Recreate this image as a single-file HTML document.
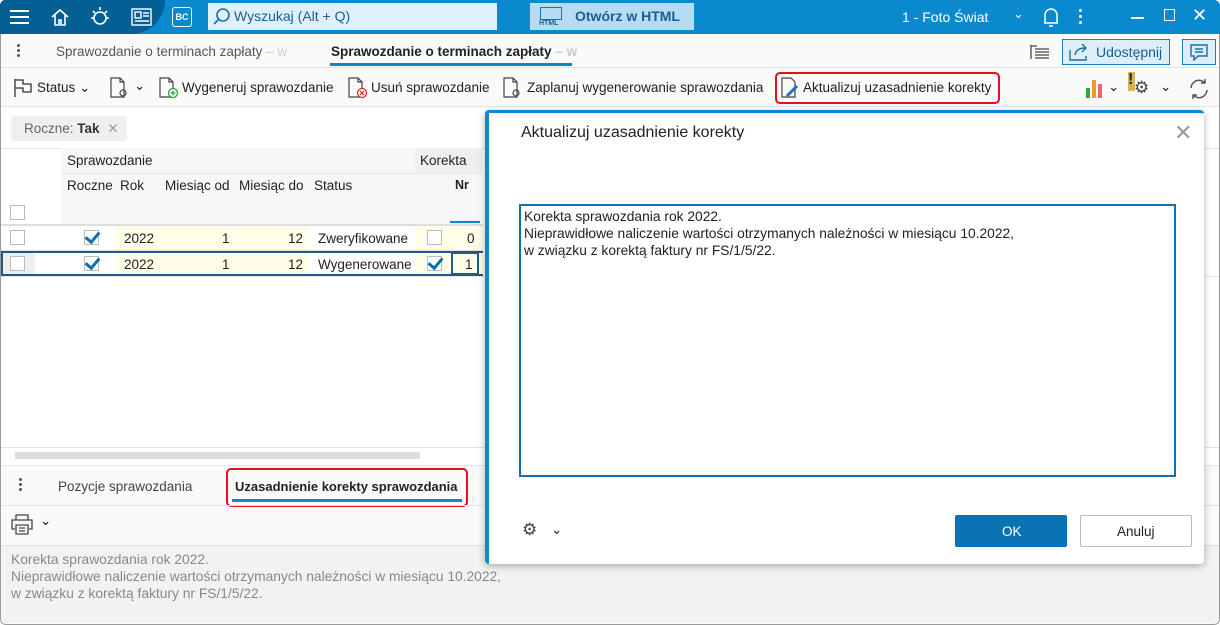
<!DOCTYPE html>
<html><head><meta charset="utf-8"><style>
*{box-sizing:border-box;margin:0;padding:0}
body{width:1220px;height:625px;overflow:hidden;font-family:"Liberation Sans",sans-serif;font-size:13.5px;color:#222;background:#fff;position:relative}
.a{position:absolute}
.t{position:absolute;white-space:nowrap}
.cb{position:absolute;width:15px;height:15px;border:1px solid #bbb;background:#fff}
.chk{position:absolute;width:15px;height:15px;border:1px solid #bbb;background:#fff}
.chk:after{content:"";position:absolute;left:3px;top:-2px;width:6px;height:11px;border:solid #0a6fb0;border-width:0 3px 3px 0;transform:rotate(40deg)}
</style></head><body>
<div class="a" style="left:0;top:0;width:1220px;height:625px;border:1px solid #9a9a9a;border-radius:6px"></div>
<!-- title bar -->
<div class="a" style="left:0;top:0;width:1220px;height:34px;background:#0a89cf;border-radius:6px 6px 0 0"></div>
<div class="a" style="left:0;top:0;width:165px;height:34px;background:#045f95;border-radius:6px 0 40px 0"></div>
<div class="a" style="left:10px;top:10px;width:19px;height:2px;background:#fff;box-shadow:0 6px #fff,0 12px #fff"></div>
<svg class="a" style="left:50px;top:7px" width="20" height="20" fill="none" stroke="#fff" stroke-width="1.6"><path d="M2 10L10 3L18 10M5 8V18H9V13H11V18H15V8"/></svg>
<svg class="a" style="left:88px;top:5px" width="24" height="24" fill="none" stroke="#fff" stroke-width="1.6"><circle cx="12" cy="13" r="6"/><path d="M12 2v3M3 13h3M18 13h3M5 6l2 2M19 6l-2 2"/></svg>
<svg class="a" style="left:130px;top:8px" width="22" height="18" fill="none" stroke="#fff" stroke-width="1.4"><rect x="2" y="1" width="19" height="16"/><rect x="5" y="4" width="6" height="6"/><path d="M13 5h6M13 8h6M5 13h14"/></svg>
<div class="a" style="left:172px;top:7px;width:20px;height:20px;border:1.5px solid #fff;border-radius:3px;color:#fff;font-size:9px;font-weight:bold;text-align:center;line-height:18px">BC</div>
<div class="a" style="left:208px;top:3px;width:289px;height:27px;background:#dff0fa"></div>
<svg class="a" style="left:213px;top:7px" width="18" height="18" fill="none" stroke="#1a6fa8" stroke-width="1.6"><circle cx="10" cy="8" r="6"/><path d="M6 12L1 17"/></svg>
<div class="t" style="left:234px;top:8px;color:#1a5f94;font-size:14px">Wyszukaj (Alt + Q)</div>
<div class="a" style="left:530px;top:3px;width:164px;height:27px;background:#b6dbf2"></div>
<div class="a" style="left:540px;top:7px;width:22px;height:13px;border:1px solid #2a6ea0"></div>
<div class="t" style="left:539px;top:20px;font-size:7px;color:#1a5f94;font-weight:bold">HTML</div>
<div class="t" style="left:575px;top:8px;color:#1a5f94;font-size:14px;font-weight:bold">Otwórz w HTML</div>
<div class="t" style="left:902px;top:9px;color:#fff;font-size:14px">1 - Foto Świat</div>
<div class="t" style="left:1013px;top:6px;color:#fff;font-size:13px">⌄</div>
<svg class="a" style="left:1042px;top:6px" width="18" height="22" fill="none" stroke="#fff" stroke-width="1.5"><path d="M3 17V9a6 6 0 0112 0v8H2h14M7 20h4"/></svg>
<div class="a" style="left:1079px;top:9px;width:3px;height:3px;background:#fff;border-radius:2px;box-shadow:0 6px #fff,0 12px #fff"></div>
<div class="a" style="left:1131px;top:17px;width:13px;height:1.5px;background:#fff"></div>
<div class="a" style="left:1164px;top:9px;width:11px;height:12px;border:1.5px solid #fff"></div>
<div class="t" style="left:1192px;top:5px;color:#fff;font-size:18px">✕</div>
<!-- tabs row -->
<div class="a" style="left:1px;top:34px;width:1218px;height:34px;background:#fafafa;border-bottom:1px solid #e4e4e4"></div>
<div class="a" style="left:17px;top:44px;width:3px;height:3px;background:#555;border-radius:2px;box-shadow:0 5px #555,0 10px #555"></div>
<div class="t" style="left:56px;top:44px;color:#555">Sprawozdanie o terminach zapłaty <span style="color:#ccc">– w</span></div>
<div class="t" style="left:331px;top:44px;color:#222;font-weight:bold">Sprawozdanie o terminach zapłaty <span style="color:#ccc">– w</span></div>
<div class="a" style="left:330px;top:63px;width:242px;height:3px;background:#0a89cf"></div>
<svg class="a" style="left:1030px;top:44px" width="20" height="16" fill="none" stroke="#444" stroke-width="1.3"><path d="M1 1v14M1 2h6M5 5h14M5 8h14M5 11h14M5 14h14"/></svg>
<div class="a" style="left:1062px;top:39px;width:108px;height:26px;border:1px solid #1a7fc0;background:#dbeefa"></div>
<svg class="a" style="left:1068px;top:42px" width="22" height="20" fill="none" stroke="#1a6fa8" stroke-width="1.4"><path d="M2 8v10h16v-4M7 13c1-5 5-7 10-7M14 2l4 4-4 4"/></svg>
<div class="t" style="left:1096px;top:44px;color:#1a5f94;font-size:14px">Udostępnij</div>
<div class="a" style="left:1182px;top:39px;width:34px;height:26px;border:1px solid #1a7fc0;background:#dbeefa"></div>
<svg class="a" style="left:1190px;top:44px" width="18" height="17" fill="none" stroke="#1a6fa8" stroke-width="1.4"><path d="M1 1h16v11H8l-4 4v-4H1z"/><path d="M5 5h8M5 8h8"/></svg>
<!-- toolbar -->
<div class="a" style="left:1px;top:68px;width:1218px;height:39px;background:#fafafa;border-bottom:1px solid #e4e4e4"></div>
<svg class="a" style="left:13px;top:78px" width="22" height="20" fill="none" stroke="#333" stroke-width="1.3"><path d="M2 1v18M2 2h8v4h8v8H10v-4H2"/></svg>
<div class="t" style="left:37px;top:80px">Status ⌄</div>
<svg class="a" style="left:109px;top:77px" width="22" height="22" fill="none" stroke="#444" stroke-width="1.2"><path d="M2 1h9l4 4v15H2zM11 1v4h4"/><circle cx="14" cy="16" r="3"/></svg>
<div class="t" style="left:134px;top:78px">⌄</div>
<svg class="a" style="left:158px;top:77px" width="22" height="22" fill="none" stroke="#444" stroke-width="1.2"><path d="M2 1h9l4 4v15H2zM11 1v4h4"/><circle cx="15" cy="16" r="4.5" fill="#fff" stroke="#2a9a3a"/><path d="M15 13.5v5M12.5 16h5" stroke="#2a9a3a"/></svg>
<div class="t" style="left:182px;top:80px">Wygeneruj sprawozdanie</div>
<svg class="a" style="left:347px;top:77px" width="22" height="22" fill="none" stroke="#444" stroke-width="1.2"><path d="M2 1h9l4 4v15H2zM11 1v4h4"/><circle cx="15" cy="16" r="4.5" fill="#fff" stroke="#d22"/><path d="M13 14l4 4M17 14l-4 4" stroke="#d22"/></svg>
<div class="t" style="left:371px;top:80px">Usuń sprawozdanie</div>
<svg class="a" style="left:502px;top:77px" width="22" height="22" fill="none" stroke="#444" stroke-width="1.2"><path d="M2 1h9l4 4v15H2zM11 1v4h4"/><circle cx="14" cy="16" r="3"/></svg>
<div class="t" style="left:527px;top:80px">Zaplanuj wygenerowanie sprawozdania</div>
<div class="a" style="left:775px;top:72px;width:225px;height:32px;border:2px solid #e0101c;border-radius:5px"></div>
<svg class="a" style="left:780px;top:77px" width="22" height="22" fill="none" stroke="#444" stroke-width="1.2"><path d="M2 1h9l4 4v15H2z"/><path d="M7 19l10-10" stroke="#1a6fbf" stroke-width="3"/></svg>
<div class="t" style="left:803px;top:80px">Aktualizuj uzasadnienie korekty</div>
<div class="a" style="left:1086px;top:88px;width:4px;height:10px;background:#3a3;"></div>
<div class="a" style="left:1092px;top:80px;width:4px;height:18px;background:#e93"></div>
<div class="a" style="left:1098px;top:84px;width:4px;height:14px;background:#e66"></div>
<div class="t" style="left:1108px;top:79px">⌄</div>
<div class="a" style="left:1128px;top:72px;width:7px;height:19px;background:#d9b25a"></div>
<div class="t" style="left:1128px;top:71px;font-weight:bold;font-size:16px">!</div>
<div class="t" style="left:1134px;top:78px;font-size:17px;color:#444">⚙</div>
<div class="t" style="left:1160px;top:79px">⌄</div>
<svg class="a" style="left:1188px;top:78px" width="22" height="22" fill="none" stroke="#555" stroke-width="1.5"><path d="M3 10a8 8 0 0114-5M19 12a8 8 0 01-14 5M17 1v4h-4M5 21v-4h4"/></svg>
<!-- filter -->
<div class="a" style="left:11px;top:116px;width:116px;height:25px;background:#efefef;border-radius:3px"></div>
<div class="t" style="left:24px;top:121px;color:#666">Roczne: <b style="color:#333">Tak</b> <span style="color:#999;margin-left:4px">✕</span></div>
<!-- grid -->
<div class="a" style="left:1px;top:148px;width:1218px;height:1px;background:#e4e4e4"></div>
<div class="a" style="left:61px;top:148px;width:420px;height:76px;background:#f7f7f7"></div>
<div class="a" style="left:415px;top:148px;width:67px;height:25px;background:#efefef"></div>
<div class="t" style="left:67px;top:153px">Sprawozdanie</div>
<div class="t" style="left:420px;top:153px">Korekta</div>
<div class="a" style="left:61px;top:173px;width:420px;height:1px;background:#e6e6e6"></div>
<div class="t" style="left:67px;top:178px">Roczne</div>
<div class="t" style="left:120px;top:178px">Rok</div>
<div class="t" style="left:165px;top:178px">Miesiąc od</div>
<div class="t" style="left:239px;top:178px">Miesiąc do</div>
<div class="t" style="left:314px;top:178px">Status</div>
<div class="t" style="left:455px;top:178px;font-weight:bold;font-size:12.5px">Nr</div>
<div class="a" style="left:450px;top:221px;width:30px;height:2px;background:#0a89cf"></div>
<div class="cb" style="left:10px;top:205px"></div>
<div class="a" style="left:1px;top:224px;width:482px;height:2px;background:#ddd"></div>
<div class="a" style="left:115px;top:226px;width:194px;height:50px;background:#fdfde8"></div>
<div class="a" style="left:415px;top:226px;width:67px;height:50px;background:#fdfde8"></div>
<div class="a" style="left:1px;top:250px;width:482px;height:1px;background:#ddd"></div>
<div class="a" style="left:1px;top:251px;width:482px;height:25px;border:2px solid #1e5a8c;border-right:none"></div>
<div class="a" style="left:3px;top:253px;width:32px;height:21px;background:#eee"></div>
<div class="cb" style="left:10px;top:230px"></div><div class="cb" style="left:10px;top:256px"></div>
<div class="chk" style="left:84px;top:230px"></div><div class="chk" style="left:84px;top:256px"></div>
<div class="t" style="left:124px;top:231px">2022</div><div class="t" style="left:124px;top:257px">2022</div>
<div class="t" style="left:222px;top:231px">1</div><div class="t" style="left:222px;top:257px">1</div>
<div class="t" style="left:288px;top:231px">12</div><div class="t" style="left:288px;top:257px">12</div>
<div class="t" style="left:318px;top:231px">Zweryfikowane</div><div class="t" style="left:318px;top:257px">Wygenerowane</div>
<div class="cb" style="left:427px;top:230px"></div><div class="chk" style="left:427px;top:256px"></div>
<div class="t" style="left:467px;top:231px">0</div>
<div class="a" style="left:451px;top:252px;width:28px;height:23px;border:2px solid #1e5a8c;background:#fdfde8"></div>
<div class="t" style="left:465px;top:257px">1</div>
<div class="a" style="left:1px;top:276px;width:1218px;height:1px;background:#e6e6e6"></div>
<!-- scrollbar -->
<div class="a" style="left:1px;top:447px;width:1218px;height:1px;background:#e4e4e4"></div>
<div class="a" style="left:15px;top:452px;width:405px;height:7px;background:#ddd"></div>
<!-- bottom tabs -->
<div class="a" style="left:1px;top:465px;width:1218px;height:1px;background:#e4e4e4"></div>
<div class="a" style="left:1px;top:466px;width:1218px;height:80px;background:#fafafa"></div>
<div class="a" style="left:19px;top:478px;width:3px;height:3px;background:#555;border-radius:2px;box-shadow:0 5px #555,0 10px #555"></div>
<div class="t" style="left:58px;top:479px;color:#444">Pozycje sprawozdania</div>
<div class="a" style="left:226px;top:468px;width:242px;height:39px;border:2px solid #e0101c;border-radius:5px"></div>
<div class="t" style="left:235px;top:479px;font-weight:bold;font-size:13px">Uzasadnienie korekty sprawozdania</div>
<div class="a" style="left:232px;top:499px;width:230px;height:3px;background:#0a89cf"></div>
<div class="a" style="left:1px;top:505px;width:1218px;height:1px;background:#e4e4e4"></div>
<svg class="a" style="left:11px;top:513px" width="22" height="22" fill="none" stroke="#444" stroke-width="1.3"><path d="M5 7V2h12v5M4 16H1V7h20v9h-3M5 12h12v9H5zM8 15h6M8 18h6"/></svg>
<div class="t" style="left:40px;top:513px">⌄</div>
<div class="a" style="left:1px;top:545px;width:1218px;height:78px;background:#f2f2f2;border-top:1px solid #e0e0e0;border-radius:0 0 6px 6px"></div>
<div class="t" style="left:11px;top:551px;color:#888;line-height:17px;font-size:13.8px">Korekta sprawozdania rok 2022.<br>Nieprawidłowe naliczenie wartości otrzymanych należności w miesiącu 10.2022,<br>w związku z korektą faktury nr FS/1/5/22.</div>
<!-- dialog -->
<div class="a" style="left:485px;top:110px;width:719px;height:454px;background:#fff;border-left:4px solid #0a89cf;border-top:3px solid #0a89cf;border-radius:4px;box-shadow:0 2px 8px rgba(0,0,0,.3)"></div>
<div class="t" style="left:521px;top:124px;font-size:16px;color:#222">Aktualizuj uzasadnienie korekty</div>
<div class="t" style="left:1174px;top:120px;font-size:22px;color:#999">✕</div>
<div class="a" style="left:519px;top:204px;width:657px;height:273px;border:2px solid #1370b0"></div>
<div class="t" style="left:524px;top:208px;font-size:13.8px;line-height:17px;color:#222">Korekta sprawozdania rok 2022.<br>Nieprawidłowe naliczenie wartości otrzymanych należności w miesiącu 10.2022,<br>w związku z korektą faktury nr FS/1/5/22.</div>
<div class="t" style="left:522px;top:520px;font-size:17px;color:#444">⚙</div>
<div class="t" style="left:551px;top:522px">⌄</div>
<div class="a" style="left:955px;top:515px;width:112px;height:32px;background:#0a73b4;border-radius:2px"></div>
<div class="t" style="left:1002px;top:524px;color:#fff">OK</div>
<div class="a" style="left:1080px;top:515px;width:112px;height:32px;border:1px solid #bbb;border-radius:2px;background:#fff"></div>
<div class="t" style="left:1117px;top:524px">Anuluj</div>
</body></html>
